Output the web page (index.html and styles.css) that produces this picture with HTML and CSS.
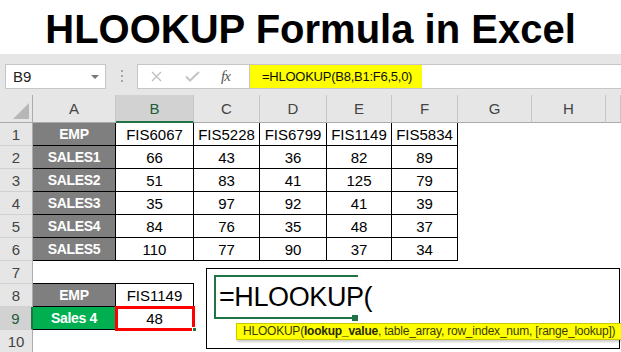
FILE: index.html
```html
<!DOCTYPE html>
<html lang="en">
<head>
  <meta charset="UTF-8">
  <title>HLOOKUP Formula in Excel</title>
  <link rel="stylesheet" href="styles.css">
</head>
<body>
  <h1 class="title">HLOOKUP Formula in Excel</h1>

  <!-- Formula bar -->
  <div class="fbar">
    <div class="namebox">
      <span>B9</span>
      <svg width="8" height="4" viewBox="0 0 8 4"><path d="M0 0H8L4 4Z" fill="#777"/></svg>
    </div>
    <div class="grip">
      <svg width="3" height="13" viewBox="0 0 3 13"><g fill="#a6a6a6"><rect x="1" y="0" width="2" height="2"/><rect x="1" y="5" width="2" height="2"/><rect x="1" y="10" width="2" height="2"/></g></svg>
    </div>
    <div class="fbtns">
      <svg class="ico-x" width="11" height="11" viewBox="0 0 11 11"><path d="M1 1L10 10M10 1L1 10" stroke="#bdbdbd" stroke-width="1.3"/></svg>
      <svg class="ico-ok" width="15" height="11" viewBox="0 0 15 11"><path d="M1 5.5L5 9.5L14 1" stroke="#c4c4c4" stroke-width="2" fill="none"/></svg>
      <span class="fx">fx</span>
    </div>
    <div class="finput"><span class="fyellow">=HLOOKUP(B8,B1:F6,5,0)</span></div>
  </div>

  <!-- Sheet -->
  <div class="sheet">
    <div class="row hdr">
      <div class="corner"><svg width="16" height="16" viewBox="0 0 16 16"><path d="M16 0V16H0Z" fill="#b7b7b7"/></svg></div>
      <div>A</div><div class="sel">B</div><div>C</div><div>D</div><div>E</div><div>F</div><div>G</div><div>H</div><div></div>
    </div>
    <div class="row">
      <div class="rh">1</div>
      <div class="c t lab">EMP</div><div class="c t">FIS6067</div><div class="c t">FIS5228</div><div class="c t">FIS6799</div><div class="c t">FIS1149</div><div class="c t">FIS5834</div>
    </div>
    <div class="row">
      <div class="rh">2</div>
      <div class="c t lab">SALES1</div><div class="c t">66</div><div class="c t">43</div><div class="c t">36</div><div class="c t">82</div><div class="c t">89</div>
    </div>
    <div class="row">
      <div class="rh">3</div>
      <div class="c t lab">SALES2</div><div class="c t">51</div><div class="c t">83</div><div class="c t">41</div><div class="c t">125</div><div class="c t">79</div>
    </div>
    <div class="row">
      <div class="rh">4</div>
      <div class="c t lab">SALES3</div><div class="c t">35</div><div class="c t">97</div><div class="c t">92</div><div class="c t">41</div><div class="c t">39</div>
    </div>
    <div class="row">
      <div class="rh">5</div>
      <div class="c t lab">SALES4</div><div class="c t">84</div><div class="c t">76</div><div class="c t">35</div><div class="c t">48</div><div class="c t">37</div>
    </div>
    <div class="row">
      <div class="rh">6</div>
      <div class="c t lab">SALES5</div><div class="c t">110</div><div class="c t">77</div><div class="c t">90</div><div class="c t">37</div><div class="c t">34</div>
    </div>
    <div class="row">
      <div class="rh">7</div>
      <div class="c bb"></div><div class="c bb"></div>
    </div>
    <div class="row">
      <div class="rh">8</div>
      <div class="c t lab">EMP</div><div class="c t">FIS1149</div>
    </div>
    <div class="row">
      <div class="rh active">9</div>
      <div class="c t lab grn">Sales 4</div><div class="c t pick">48</div>
    </div>
    <div class="row">
      <div class="rh">10</div>
    </div>

    <!-- Zoomed cell editor -->
    <div class="popup">
      <div class="editor">=HLOOKUP(<span class="caret"></span></div>
      <div class="tip">HLOOKUP(<b>lookup_value</b>, table_array, row_index_num, [range_lookup])</div>
    </div>
  </div>
</body>
</html>
```

FILE: styles.css
```css
/* Base */
*, *::before, *::after {
  box-sizing: border-box;
}
html, body {
  margin: 0;
  padding: 0;
  width: 621px;
  height: 352px;
  overflow: hidden;
  background: #fff;
  font-family: "Liberation Sans", Arial, sans-serif;
}

/* Title */
.title {
  margin: 0;
  height: 54px;
  line-height: 59px;
  font-size: 40px;
  font-weight: 700;
  text-align: center;
  color: #000;
  overflow: hidden;
}

/* Formula bar */
.fbar {
  display: flex;
  align-items: flex-start;
  height: 41px;
  padding-top: 10px;
  background: #e6e6e6;
}
.namebox {
  display: flex;
  align-items: center;
  justify-content: space-between;
  margin-left: 5px;
  width: 101px;
  height: 25px;
  padding: 0 6px 0 7px;
  background: #fff;
  border: 1px solid #c6c6c6;
  font-size: 15px;
  color: #222;
}
.grip {
  display: flex;
  align-items: center;
  justify-content: center;
  width: 31px;
  height: 25px;
}
.fbtns {
  display: flex;
  align-items: center;
  width: 112px;
  height: 25px;
  padding-left: 13px;
  background: #fff;
  border: 1px solid #c6c6c6;
  border-right: 0;
}
.ico-x {
  margin-right: 23px;
}
.ico-ok {
  margin-right: 21px;
}
.fx {
  font-family: "Liberation Serif", serif;
  font-style: italic;
  font-size: 15px;
  color: #555;
  letter-spacing: -1px;
}
.finput {
  flex: 1;
  height: 25px;
  background: #fff;
  border: 1px solid #c6c6c6;
  border-right: 0;
}
.fyellow {
  display: inline-block;
  width: 172px;
  height: 23px;
  line-height: 23px;
  padding-left: 12px;
  background: #ffff00;
  font-size: 13px;
  letter-spacing: -0.25px;
  color: #111;
}

/* Sheet grid */
.sheet {
  position: relative;
}
.row {
  display: grid;
  grid-template-columns: 33px 83px 78px 66px 67px 65px 66px 74px 74px 15px;
  height: 23px;
}
.hdr {
  height: 28px;
}
.hdr > div {
  display: flex;
  align-items: center;
  justify-content: center;
  background: #e6e6e6;
  border-right: 1px solid #c6c6c6;
  border-bottom: 1px solid #ababab;
  font-size: 15px;
  color: #444;
}
.hdr > .sel {
  background: #d2d2d2;
  color: #1d5e38;
  border-bottom: 2px solid #217346;
}
.hdr > .corner {
  align-items: flex-end;
  justify-content: flex-end;
  padding: 0 3px 3px 0;
  border-right-color: #ababab;
}
.rh {
  display: flex;
  align-items: center;
  justify-content: center;
  background: #e6e6e6;
  border-right: 1px solid #ababab;
  border-bottom: 1px solid #d0d0d0;
  font-size: 15px;
  color: #444;
}
.rh.active {
  background: #d2d2d2;
  color: #1d5e38;
  border-right: 2px solid #217346;
}

/* Cells */
.c {
  display: flex;
  align-items: center;
  justify-content: center;
  font-size: 15px;
  color: #000;
  white-space: nowrap;
}
.t {
  border-right: 1px solid #000;
  border-bottom: 1px solid #000;
}
.bb {
  border-bottom: 1px solid #000;
}
.lab {
  background: #7f7f7f;
  color: #fff;
  font-weight: 700;
  font-size: 14px;
  letter-spacing: -0.3px;
}
.grn {
  background: #00b050;
}
.pick {
  position: relative;
  outline: 3px solid #ff0000;
  outline-offset: -2px;
}
.pick::after {
  content: "";
  position: absolute;
  right: -4px;
  bottom: -3px;
  width: 5px;
  height: 5px;
  background: #217346;
  border: 1px solid #fff;
}

/* Zoomed editor overlay */
.popup {
  position: absolute;
  left: 206px;
  top: 173px;
  width: 414px;
  height: 81px;
  padding: 6px 0 0 7px;
  background: #fff;
  border: 1px solid #000;
}
.editor {
  position: relative;
  display: flex;
  align-items: center;
  width: 144px;
  height: 44px;
  padding-left: 3px;
  border: 2px solid #217346;
  border-right: 0;
  font-size: 27px;
  letter-spacing: -0.4px;
  color: #000;
  white-space: nowrap;
}
.editor::after {
  content: "";
  position: absolute;
  right: 0;
  bottom: -4px;
  width: 6px;
  height: 6px;
  background: #217346;
}
.caret {
  display: inline-block;
  width: 1px;
  height: 36px;
  margin-left: 3px;
  background: #8c8c8c;
}
.tip {
  position: absolute;
  left: 29px;
  top: 54px;
  width: 386px;
  height: 17px;
  line-height: 15px;
  padding-left: 6px;
  background: #ffff00;
  border: 1px solid #c8c800;
  box-shadow: 1px 2px 2px rgba(0, 0, 0, 0.2);
  font-size: 12px;
  letter-spacing: -0.22px;
  color: #3b3b00;
  white-space: nowrap;
  overflow: hidden;
}
.tip b {
  color: #2a2a00;
}
```
